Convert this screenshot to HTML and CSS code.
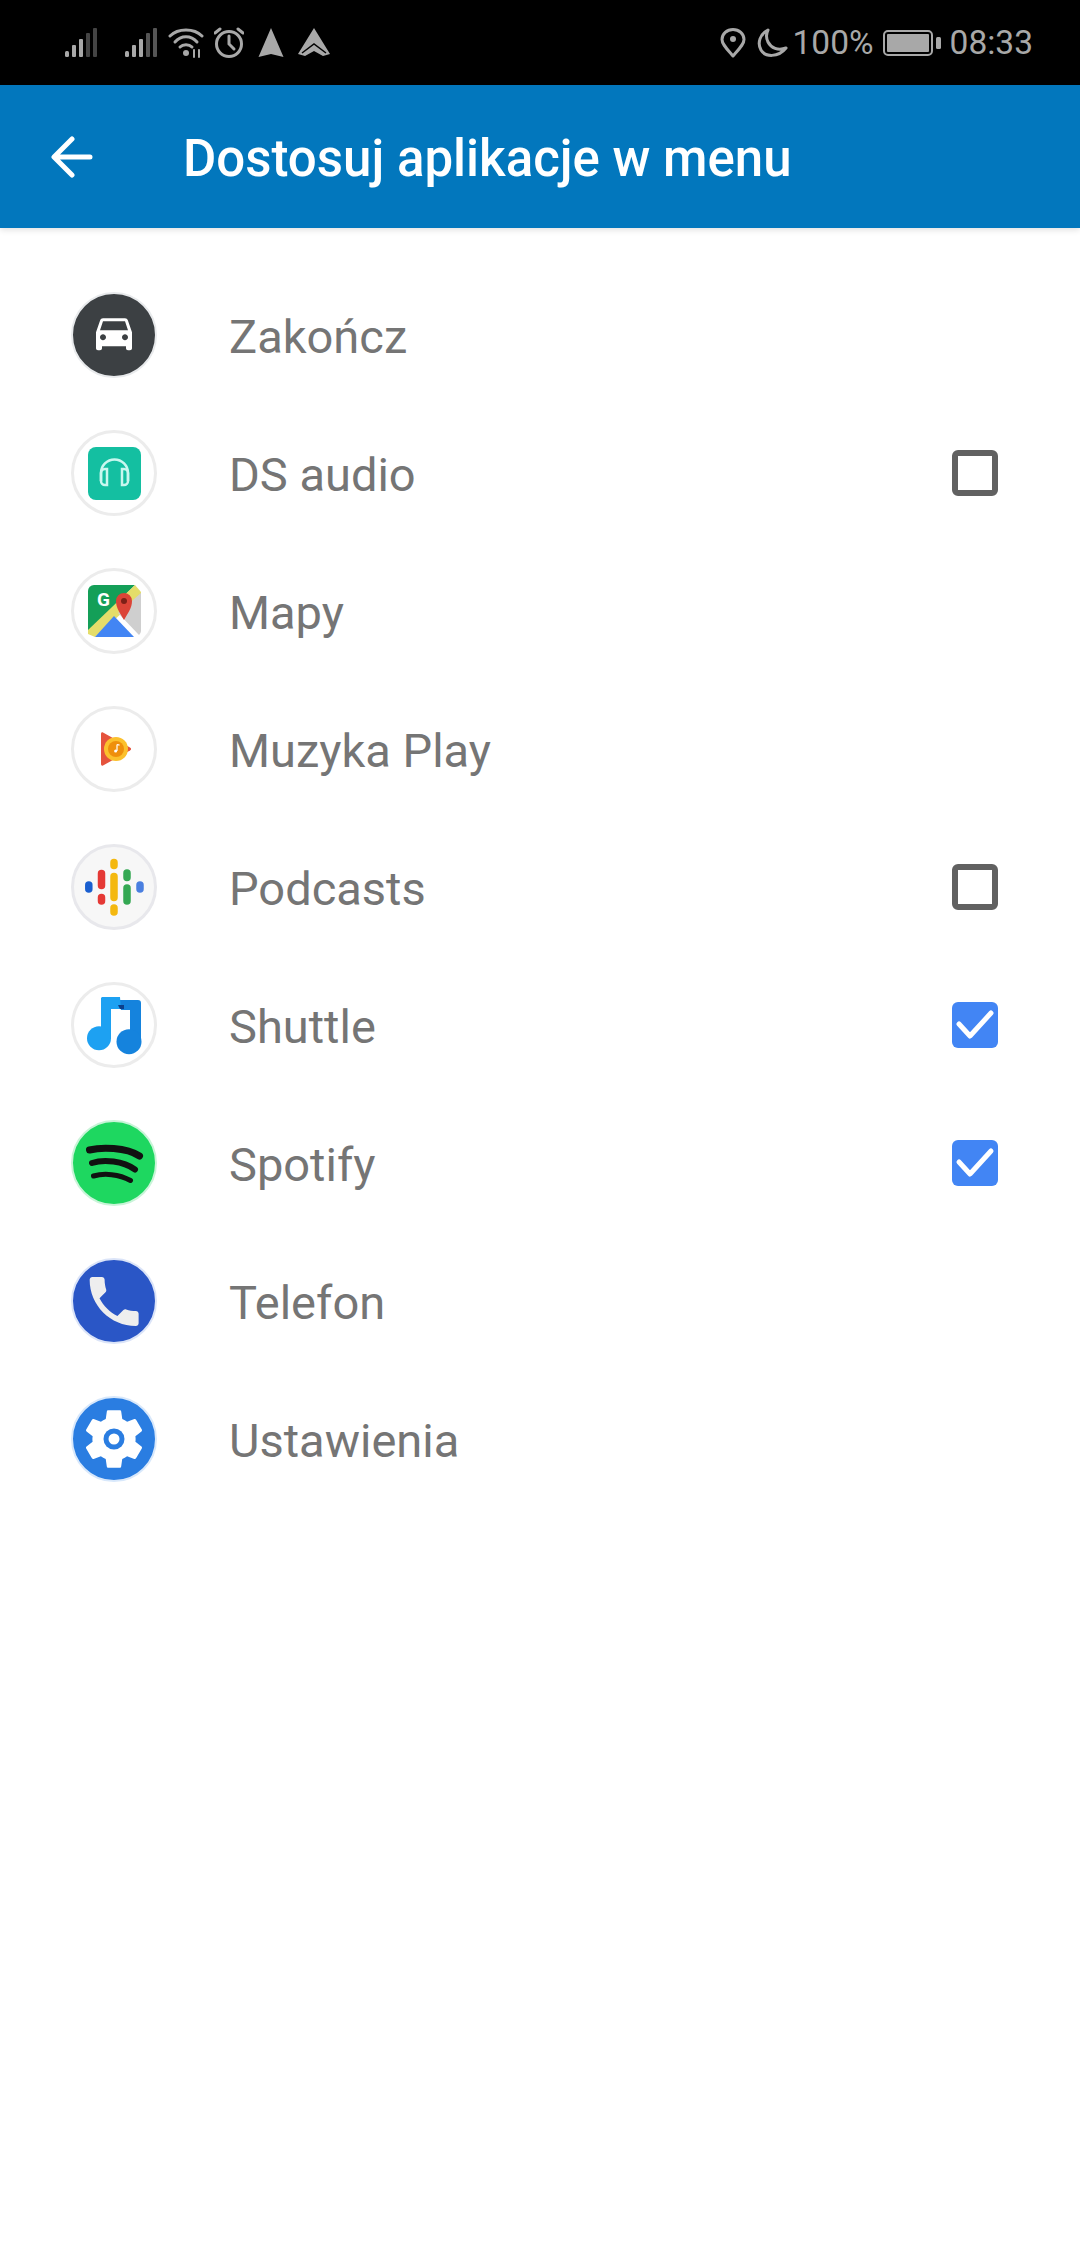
FILE: index.html
```html
<!DOCTYPE html>
<html lang="pl">
<head>
  <meta charset="UTF-8">
  <meta name="viewport" content="width=device-width, initial-scale=1.0">
  <title>Dostosuj aplikacje w menu</title>
  <link rel="stylesheet" href="styles.css">
</head>
<body>
  <div class="status-bar">
    <div class="status-left">
      <svg class="st-signal sim-one" viewBox="0 0 34 32">
        <rect x="1" y="24" width="4" height="6" rx="1.5" fill="#a8a8a8"/>
        <rect x="8" y="18" width="4" height="12" rx="1" fill="#a8a8a8"/>
        <rect x="15" y="12" width="4" height="18" rx="1" fill="#a8a8a8"/>
        <rect x="22" y="6" width="4" height="24" rx="1" fill="#444"/>
        <rect x="29" y="1" width="4" height="29" rx="1" fill="#444"/>
      </svg>
      <svg class="st-signal" viewBox="0 0 34 32">
        <rect x="1" y="24" width="4" height="6" rx="1.5" fill="#a8a8a8"/>
        <rect x="8" y="18" width="4" height="12" rx="1" fill="#a8a8a8"/>
        <rect x="15" y="12" width="4" height="18" rx="1" fill="#a8a8a8"/>
        <rect x="22" y="6" width="4" height="24" rx="1" fill="#555"/>
        <rect x="29" y="1" width="4" height="29" rx="1" fill="#555"/>
      </svg>
      <svg class="st-wifi" viewBox="0 0 36 32" fill="none" stroke="#a8a8a8" stroke-width="3" stroke-linecap="round">
        <path d="M2 9C10 1 26 1 34 9"/>
        <path d="M7 15C13 8 23 8 29 15"/>
        <path d="M12 20C15 17 21 17 24 20"/>
        <circle cx="18" cy="26" r="3" fill="#a8a8a8" stroke="none"/>
        <path d="M26 23v7M31 23v7" stroke-width="2"/>
      </svg>
      <svg class="st-alarm" viewBox="0 0 30 32" fill="none" stroke="#a8a8a8" stroke-width="3" stroke-linecap="round">
        <circle cx="15" cy="17" r="12.500"/>
        <path d="M15 9v8l5 5"/>
        <path d="M1 6l5-4M29 6l-5-4"/>
      </svg>
      <svg class="st-nav" viewBox="0 0 26 32">
        <path d="M13 1L25.500 30L13 27L.5 30Z" fill="#a8a8a8"/>
      </svg>
      <svg class="st-nav-double" viewBox="0 0 32 32">
        <path d="M16 1L32 27L25 29L16 24L7 29L0 27Z" fill="#a8a8a8"/>
        <path d="M4 26L16 17L28 26" fill="none" stroke="#000" stroke-width="1.500"/>
      </svg>
    </div>
    <div class="status-right">
      <svg class="st-pin" viewBox="0 0 26 30" fill="none" stroke="#a8a8a8" stroke-width="3">
        <path d="M13 28C6 20 2 16 2 11.500A11 10 0 0 1 24 11.500C24 16 20 20 13 28Z" stroke-linejoin="round"/>
        <circle cx="13" cy="11" r="3" fill="#a8a8a8" stroke="none"/>
      </svg>
      <svg class="st-moon" viewBox="0 0 32 30" fill="none" stroke="#a8a8a8" stroke-width="3" stroke-linejoin="round">
        <path d="M12 2C4 6 1 15 5 22C9 29 22 30 30 20C22 23 15 20 12 14C10 10 10 6 12 2Z"/>
      </svg>
      <span class="st-text st-percent">100%</span>
      <svg class="st-battery" viewBox="0 0 58 28">
        <rect x="1" y="2" width="48" height="24" rx="4" fill="none" stroke="#a8a8a8" stroke-width="2"/>
        <rect x="4" y="5" width="42" height="18" rx="1" fill="#a8a8a8"/>
        <rect x="53" y="8" width="5" height="12" rx="1.500" fill="#a8a8a8"/>
      </svg>
      <span class="st-text">08:33</span>
    </div>
  </div>

  <header class="app-bar">
    <svg class="back-icon" viewBox="0 0 42 42" fill="none" stroke="#fff" stroke-width="5" stroke-linecap="round" stroke-linejoin="round">
      <path d="M39 21H4M21 3L3 21L21 39"/>
    </svg>
    <h1 class="app-title">Dostosuj aplikacje w menu</h1>
  </header>

  <ul class="app-list">
    <li class="app-row">
      <svg class="app-icon" viewBox="0 0 86 86">
        <circle cx="43" cy="43" r="42" fill="#3c4043" stroke="#e8eaec" stroke-width="2"/>
        <path transform="translate(19 16.300) scale(2)" fill="#fff" d="M18.920 6.010C18.720 5.420 18.160 5 17.500 5h-11c-.66 0-1.210.42-1.420 1.010L3 12v8c0 .55.45 1 1 1h1c.55 0 1-.45 1-1v-1h12v1c0 .55.45 1 1 1h1c.55 0 1-.45 1-1v-8l-2.080-5.990zM6.500 16c-.83 0-1.500-.67-1.500-1.500S5.670 13 6.500 13s1.500.67 1.500 1.500S7.330 16 6.500 16zm11 0c-.83 0-1.500-.67-1.500-1.500s.67-1.500 1.500-1.500 1.500.67 1.500 1.500-.67 1.500-1.500 1.500zM5 11l1.500-4.500h11L19 11H5z"/>
      </svg>
      <span class="app-name">Zakończ</span>
    </li>

    <li class="app-row">
      <svg class="app-icon" viewBox="0 0 86 86">
        <circle cx="43" cy="43" r="41.500" fill="#fff" stroke="#ececec" stroke-width="3"/>
        <rect x="17" y="17" width="53" height="53" rx="8" fill="#14bfa1"/>
        <path d="M30 51v-8a13.500 13.500 0 0 1 27 0v8" fill="none" stroke="#c9f7ef" stroke-width="2.500"/>
        <path d="M36 39v16h-2a4 4 0 0 1-4-4v-8a4 4 0 0 1 4-4zM51 39v16h2a4 4 0 0 0 4-4v-8a4 4 0 0 0-4-4z" fill="none" stroke="#c9f7ef" stroke-width="2.500"/>
      </svg>
      <span class="app-name">DS audio</span>
      <span class="check"></span>
    </li>

    <li class="app-row">
      <svg class="app-icon" viewBox="0 0 86 86">
        <circle cx="43" cy="43" r="41.500" fill="#fff" stroke="#ececec" stroke-width="3"/>
        <path d="M23 17H64L17 64V23A6 6 0 0 1 23 17Z" fill="#149f58"/>
        <path d="M64 17L70 24L70 28L24 69L17 66V62Z" fill="#e4dd6a"/>
        <path d="M43 48L63 69H24Z" fill="#4285f4"/>
        <path d="M70 25V63A6 6 0 0 1 68 67L47 45Z" fill="#cfcfcf"/>
        <path d="M53 52C49 45 45 40 45 33A8 8 0 0 1 61 33C61 40 57 45 53 52Z" fill="#db4437"/>
        <circle cx="53" cy="33" r="3" fill="#7c2017"/>
        <text class="maps-g" x="26" y="38">G</text>
      </svg>
      <span class="app-name">Mapy</span>
    </li>

    <li class="app-row">
      <svg class="app-icon" viewBox="0 0 86 86">
        <circle cx="43" cy="43" r="41.500" fill="#fff" stroke="#ececec" stroke-width="3"/>
        <path d="M30 28C30 26.500 31 26 32 26.500L59 41.500C60.500 42.500 60.500 43.500 59 44.500L32 59.500C31 60 30 59.500 30 58Z" fill="#e5533d"/>
        <circle cx="45" cy="43" r="12" fill="#fbc02d"/>
        <circle cx="45" cy="43" r="8" fill="#ef8f0c"/>
        <path d="M46 38.500v6.500M46 38.500l2.500 .7" stroke="#fff" stroke-width="1.200" fill="none"/>
        <circle cx="44.600" cy="45" r="1.500" fill="#fff"/>
      </svg>
      <span class="app-name">Muzyka Play</span>
    </li>

    <li class="app-row">
      <svg class="app-icon" viewBox="0 0 86 86" stroke-width="7.500" stroke-linecap="round">
        <circle cx="43" cy="43" r="41.500" fill="#f7f7f7" stroke="#e8e8ec" stroke-width="3"/>
        <path d="M43 18.500v3M43 32.500v21M43 64v4" stroke="#f4b80f"/>
        <path d="M30.500 29.500v12M30.500 53.500v3.500" stroke="#e53935"/>
        <path d="M56 29v4.500M56 44v13" stroke="#34a853"/>
        <path d="M17.800 41v4" stroke="#1a5fd0"/>
        <path d="M69 41v4" stroke="#4a7fe0"/>
      </svg>
      <span class="app-name">Podcasts</span>
      <span class="check"></span>
    </li>

    <li class="app-row">
      <svg class="app-icon" viewBox="0 0 86 86">
        <circle cx="43" cy="43" r="41.500" fill="#fff" stroke="#ececec" stroke-width="3"/>
        <path d="M47 18H67A3 3 0 0 1 70 21V60H59V28H50Z" fill="#1583dd"/>
        <circle cx="58" cy="59.700" r="12.500" fill="#1583dd"/>
        <path d="M31 15H49L50 27H40V57H30V16Z" fill="#1da1f2"/>
        <circle cx="28" cy="56.300" r="12" fill="#1da1f2"/>
        <path d="M47 23H53V27H49Z" fill="#0d3f8a"/>
      </svg>
      <span class="app-name">Shuttle</span>
      <span class="check is-checked">
        <svg class="check-mark" viewBox="0 0 46 46" fill="none" stroke="#fff" stroke-width="5" stroke-linecap="round" stroke-linejoin="round">
          <path d="M7 22L18 34L39 11"/>
        </svg>
      </span>
    </li>

    <li class="app-row">
      <svg class="app-icon" viewBox="0 0 86 86" fill="none" stroke="#111" stroke-linecap="round">
        <circle cx="43" cy="43" r="42" fill="#1ed760" stroke="#c9f4d8" stroke-width="2"/>
        <path d="M18.500 30C30 27 55 27 68.500 36" stroke-width="7"/>
        <path d="M21 43C33 39 52 41 64 49.500" stroke-width="6"/>
        <path d="M22.500 56C33 53 48 54 59.500 60.500" stroke-width="5"/>
      </svg>
      <span class="app-name">Spotify</span>
      <span class="check is-checked">
        <svg class="check-mark" viewBox="0 0 46 46" fill="none" stroke="#fff" stroke-width="5" stroke-linecap="round" stroke-linejoin="round">
          <path d="M7 22L18 34L39 11"/>
        </svg>
      </span>
    </li>

    <li class="app-row">
      <svg class="app-icon" viewBox="0 0 86 86">
        <circle cx="43" cy="43" r="42" fill="#2a56c6" stroke="#dbe4f8" stroke-width="2"/>
        <path transform="translate(10.500 10.800) scale(2.720)" fill="#eeeeee" d="M6.620 10.790c1.440 2.830 3.760 5.140 6.590 6.590l2.200-2.200c.27-.27.67-.36 1.020-.24 1.120.37 2.330.57 3.570.57.55 0 1 .45 1 1V20c0 .55-.45 1-1 1-9.390 0-17-7.610-17-17 0-.55.45-1 1-1h3.500c.55 0 1 .45 1 1 0 1.250.2 2.450.57 3.570.11.35.03.74-.25 1.020l-2.200 2.200z"/>
      </svg>
      <span class="app-name">Telefon</span>
    </li>

    <li class="app-row">
      <svg class="app-icon" viewBox="0 0 86 86">
        <circle cx="43" cy="43" r="42" fill="#2a7de1" stroke="#d8e8fb" stroke-width="2"/>
        <path transform="translate(7 7) scale(3)" fill="#fff" d="M19.140 12.940c.04-.3.06-.61.06-.94 0-.32-.02-.64-.07-.94l2.030-1.580c.18-.14.23-.41.12-.61l-1.920-3.320c-.12-.22-.37-.29-.59-.22l-2.390.96c-.5-.38-1.030-.7-1.620-.94l-.36-2.540c-.04-.24-.24-.41-.48-.41h-3.840c-.24 0-.43.17-.47.41l-.36 2.540c-.59.24-1.130.57-1.620.94l-2.390-.96c-.22-.08-.47 0-.59.22L2.740 8.870c-.12.21-.08.47.12.61l2.030 1.580c-.05.3-.09.63-.09.94s.02.64.07.94l-2.030 1.580c-.18.14-.23.41-.12.61l1.920 3.320c.12.22.37.29.59.22l2.390-.96c.5.38 1.030.7 1.620.94l.36 2.540c.05.24.24.41.48.41h3.840c.24 0 .44-.17.47-.41l.36-2.540c.59-.24 1.130-.56 1.620-.94l2.390.96c.22.08.47 0 .59-.22l1.920-3.320c.12-.22.07-.47-.12-.61l-2.010-1.580z"/>
        <circle cx="43" cy="43" r="10.500" fill="#2a7de1"/>
        <circle cx="43" cy="43" r="5.500" fill="#fff"/>
      </svg>
      <span class="app-name">Ustawienia</span>
    </li>
  </ul>
</body>
</html>
```

FILE: styles.css
```css
body {
  margin: 0;
  height: 2244px;
  overflow: hidden;
  background-color: #fff;
  font-family: Roboto, 'Liberation Sans', sans-serif;
}

.status-bar {
  height: 85px;
  box-sizing: border-box;
  padding: 0 47px 0 64px;
  background-color: #000;
  display: flex;
  align-items: center;
  justify-content: space-between;
}

.status-left,
.status-right {
  display: flex;
  align-items: center;
}

.status-left {
  gap: 10px;
}

.status-right {
  gap: 9px;
}

.st-signal {
  width: 34px;
  height: 32px;
}

.sim-one {
  margin-right: 16px;
}

.st-wifi {
  width: 36px;
  height: 32px;
}

.st-alarm {
  width: 30px;
  height: 32px;
}

.st-nav {
  width: 26px;
  height: 32px;
  margin-left: 4px;
}

.st-nav-double {
  width: 32px;
  height: 32px;
  margin-left: 4px;
}

.st-pin {
  width: 26px;
  height: 30px;
}

.st-moon {
  width: 32px;
  height: 30px;
  margin-left: 1px;
}

.st-percent {
  margin-left: -4px;
}

.st-battery {
  width: 58px;
  height: 28px;
}

.st-text {
  color: #a8a8a8;
  font-size: 33.5px;
}

.app-bar {
  height: 143px;
  background-color: #0277bd;
  box-shadow: 0 2px 6px rgba(0,0,0,0.12);
  display: flex;
  align-items: center;
}

.back-icon {
  width: 42px;
  height: 42px;
  margin-left: 51px;
}

.app-title {
  margin: 4px 0 0 90px;
  color: #fff;
  font-size: 51px;
  font-weight: 500;
}

.app-list {
  list-style: none;
  margin: 0;
  padding: 38px 0 0;
}

.app-row {
  height: 138px;
  padding: 0 82px 0 71px;
  display: flex;
  align-items: center;
}

.app-icon {
  width: 86px;
  height: 86px;
  flex-shrink: 0;
}

.app-name {
  margin: 2px 0 0 72px;
  flex: 1;
  color: #757575;
  font-size: 47px;
}

.check {
  width: 46px;
  height: 46px;
  box-sizing: border-box;
  border: 6px solid #616161;
  border-radius: 6px;
}

.check.is-checked {
  border: none;
  background-color: #4285f4;
}

.check-mark {
  display: block;
  width: 46px;
  height: 46px;
}

.maps-g {
  fill: #fff;
  font-size: 19px;
  font-weight: 700;
  font-family: Roboto, sans-serif;
}
```
